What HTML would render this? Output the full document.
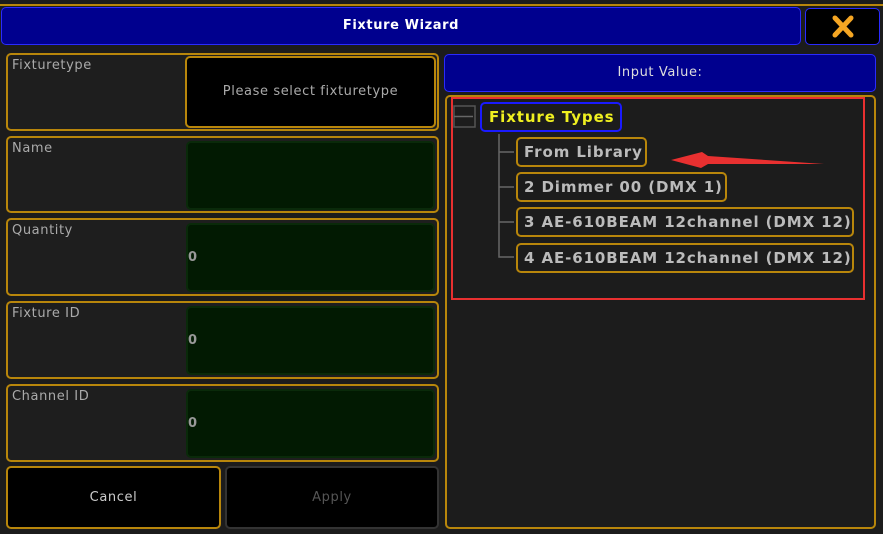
<!DOCTYPE html><html><head><style>
body{margin:0;width:883px;height:534px;background:#1c1c1c;position:relative;overflow:hidden;font-family:"DejaVu Sans","Liberation Sans",sans-serif;}
.a{position:absolute;box-sizing:border-box;}
.row{border:2px solid #b8860b;border-radius:5px;background:#1e1e1e;}
.lab{color:#aaa;font-size:13px;position:absolute;left:4px;top:3px;letter-spacing:0.6px;}
.fld{border:2px solid #0a2a0a;border-radius:5px;background:#021a02;color:#999;font-size:13px;font-weight:bold;}
.it{border:2px solid #b8860b;border-radius:5px;color:#bbb;font-weight:bold;font-size:15px;padding:0 6px;line-height:26px;height:30px;background:#1c1c1c;letter-spacing:0.9px;white-space:nowrap;}
</style></head><body>
<div class="a" style="left:0;top:4px;width:883px;height:2px;background:#b8860b"></div>
<div class="a" style="left:1px;top:7px;width:800px;height:38px;background:#00008e;border:1px solid #2a2aff;border-radius:5px;color:#fff;font-weight:bold;font-size:13px;text-align:center;line-height:36px;letter-spacing:0.6px">Fixture Wizard</div>
<div class="a" style="left:805px;top:8px;width:75px;height:37px;background:#000;border:1px solid #2a2aff;border-radius:5px;"><svg width="75" height="37"><path d="M29 9L45 26M45 9L29 26" stroke="#f5a623" stroke-width="5" stroke-linecap="round"/></svg></div>

<div class="a row" style="left:6px;top:53px;width:433px;height:78px"><span class="lab">Fixturetype</span>
<div class="a" style="left:177px;top:1px;width:251px;height:72px;background:#000;border:2px solid #b8860b;border-radius:5px;color:#aaa;font-size:13px;text-align:center;line-height:68px;letter-spacing:0.6px">Please select fixturetype</div></div>
<div class="a row" style="left:6px;top:136px;width:433px;height:77px"><span class="lab">Name</span><div class="a fld" style="left:178px;top:3px;width:249px;height:69px"></div></div>
<div class="a row" style="left:6px;top:218px;width:433px;height:78px"><span class="lab">Quantity</span><div class="a fld" style="left:178px;top:3px;width:249px;height:69px;line-height:65px">0</div></div>
<div class="a row" style="left:6px;top:301px;width:433px;height:78px"><span class="lab">Fixture ID</span><div class="a fld" style="left:178px;top:3px;width:249px;height:69px;line-height:65px">0</div></div>
<div class="a row" style="left:6px;top:384px;width:433px;height:78px"><span class="lab">Channel ID</span><div class="a fld" style="left:178px;top:3px;width:249px;height:69px;line-height:65px">0</div></div>
<div class="a" style="left:6px;top:466px;width:215px;height:63px;background:#000;border:2px solid #b8860b;border-radius:5px;color:#ccc;font-size:13px;text-align:center;line-height:59px;letter-spacing:0.6px">Cancel</div>
<div class="a" style="left:225px;top:466px;width:214px;height:63px;background:#000;border:2px solid #333;border-radius:5px;color:#555;font-size:13px;text-align:center;line-height:59px;letter-spacing:0.6px">Apply</div>

<div class="a" style="left:444px;top:54px;width:432px;height:38px;background:#00008e;border:1px solid #2a2aff;border-radius:5px;color:#ddd;font-size:13px;text-align:center;line-height:36px;letter-spacing:0.6px">Input Value:</div>
<div class="a" style="left:445px;top:95px;width:431px;height:434px;border:2px solid #b8860b;border-radius:5px"></div>
<div class="a" style="left:451px;top:97px;width:414px;height:203px;border:2px solid #e83030"></div>
<svg class="a" style="left:440px;top:100px" width="443" height="180">
<rect x="14" y="6" width="21" height="21" fill="none" stroke="#555" stroke-width="1.5"/><line x1="14" y1="16.5" x2="33" y2="16.5" stroke="#666" stroke-width="1.5"/>
<path d="M59 34V157H74M59 52H74M59 87H74M59 122H74" stroke="#666" stroke-width="1.5" fill="none"/>
<path d="M231 60L262 52L268 56L384 64L268 64L261 68Z" fill="#e83030"/>
</svg>
<div class="a" style="left:480px;top:102px;width:142px;height:30px;border:2px solid #1a1aff;border-radius:5px;color:#f0f020;font-weight:bold;font-size:15px;line-height:26px;padding-left:7px;letter-spacing:0.9px">Fixture Types</div>
<div class="a it" style="left:516px;top:137px;width:131px">From Library</div>
<div class="a it" style="left:516px;top:172px;width:211px">2 Dimmer 00 (DMX 1)</div>
<div class="a it" style="left:516px;top:207px;width:338px">3 AE-610BEAM 12channel (DMX 12)</div>
<div class="a it" style="left:516px;top:243px;width:338px">4 AE-610BEAM 12channel (DMX 12)</div>
</body></html>
